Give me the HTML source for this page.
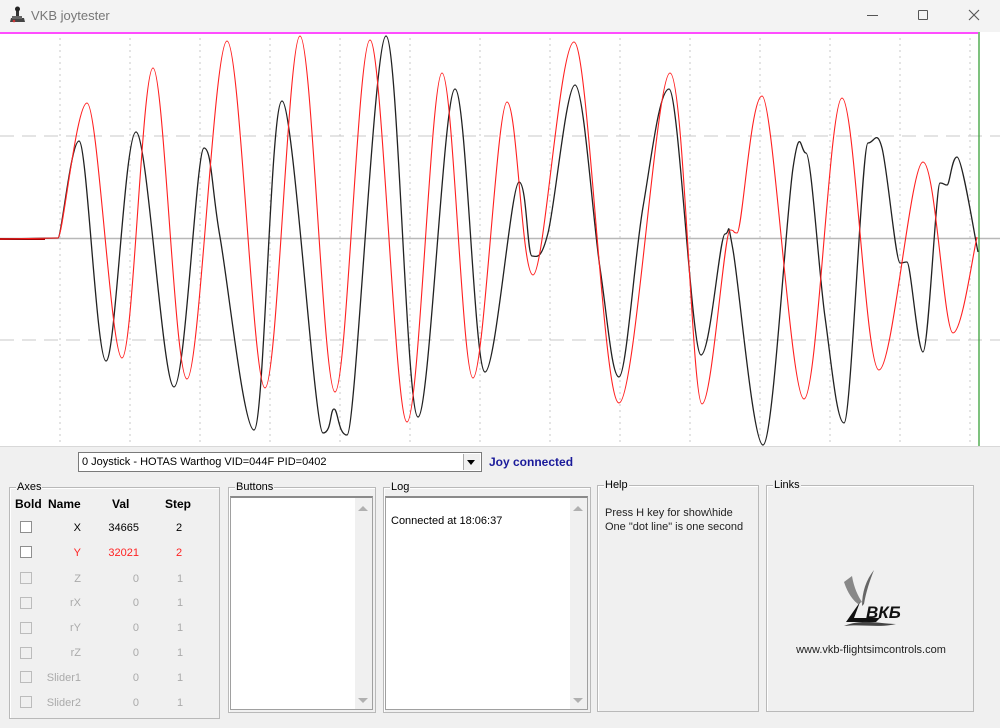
<!DOCTYPE html>
<html><head><meta charset="utf-8"><style>
*{margin:0;padding:0;box-sizing:border-box}
body{width:1000px;height:728px;overflow:hidden;background:#f0f0f0;font-family:"Liberation Sans",sans-serif;font-size:11px;color:#000;position:relative}
.a{position:absolute;white-space:nowrap}
.title{left:0;top:0;width:1000px;height:32px;background:#f3f3f3}
.gb{position:absolute;border:1px solid #b9b9b9;box-shadow:inset 1px 1px 0 #fff}
.lg{position:absolute;top:-7px;left:6px;background:#f0f0f0;padding:0 1px;font-size:11px}
.lb{position:absolute;background:#fff;border:1px solid #a0a0a0;border-top:2px solid #8a8a8a}
.sb{position:absolute;right:0;top:0;bottom:0;width:17px;background:#f0f0f0}
.cb{position:absolute;left:20px;width:12px;height:12px;border:1px solid #8f8f8f;background:#fff}
.cb.d{background:#f0f0f0;border-color:#bcbcbc}
.r{position:absolute;text-align:right}
</style></head><body>
<div class="a title"></div>
<svg class="a" style="left:10px;top:6px" width="16" height="18" viewBox="0 0 16 18"><rect x="6" y="1" width="3" height="9" fill="#333"/><circle cx="7.5" cy="3" r="2.5" fill="#222"/><path d="M1 12h13l1 4H0z" fill="#444"/><rect x="2" y="10" width="10" height="3" fill="#666"/><circle cx="4" cy="15" r="1.3" fill="#c33"/></svg>
<div class="a" style="left:31px;top:8px;font-size:13px;color:#777">VKB joytester</div>
<div class="a" style="left:867px;top:15px;width:11px;height:1px;background:#555"></div>
<div class="a" style="left:918px;top:10px;width:10px;height:10px;border:1px solid #555;border-radius:1px"></div>
<svg class="a" style="left:968px;top:9px" width="12" height="12"><path d="M1 1L11 11M11 1L1 11" stroke="#555" stroke-width="1.1"/></svg>

<svg class="a" style="left:0;top:32px" width="1000" height="414" viewBox="0 32 1000 414">
<rect x="0" y="32" width="1000" height="414" fill="#fff"/>
<g stroke="#c8c8c8" stroke-width="1" stroke-dasharray="2,4" id="vg"></g>
<line x1="0" y1="136" x2="1000" y2="136" stroke="#c8c8c8" stroke-dasharray="14,8"/>
<line x1="0" y1="340" x2="1000" y2="340" stroke="#c8c8c8" stroke-dasharray="14,8"/>
<line x1="0" y1="238.5" x2="1000" y2="238.5" stroke="#b8b8b8" stroke-width="1.5"/>
<line x1="0" y1="33" x2="978" y2="33" stroke="#ff4dff" stroke-width="2"/>
<line x1="979" y1="32" x2="979" y2="446" stroke="#2a9a2a" stroke-width="1.2"/>
<line x1="0" y1="239" x2="45" y2="239" stroke="#a00" stroke-width="2"/>
<path id="blk" fill="none" stroke="#222" stroke-width="1.3"/>
<path id="red" fill="none" stroke="#ff2020" stroke-width="1.1"/>
</svg>

<div class="a" style="left:0;top:446px;width:1000px;height:1px;background:#d8d8d8"></div>
<div class="a" style="left:78px;top:452px;width:404px;height:20px;background:#fff;border:1px solid #7a7a7a"></div>
<div class="a" style="left:82px;top:456px">0 Joystick - HOTAS Warthog VID=044F PID=0402</div>
<div class="a" style="left:463px;top:454px;width:17px;height:16px;background:#f0f0f0;border-left:1px solid #aaa"></div>
<div class="a" style="left:467px;top:460px;width:0;height:0;border-left:4px solid transparent;border-right:4px solid transparent;border-top:5px solid #000"></div>
<div class="a" style="left:489px;top:455px;font-weight:bold;font-size:12px;color:#1a1a9a">Joy connected</div>

<div class="gb" style="left:9px;top:487px;width:211px;height:232px"><span class="lg" style="left:6px">Axes</span></div>
<div class="a" style="left:15px;top:497px;font-weight:bold;font-size:12px">Bold</div>
<div class="a" style="left:48px;top:497px;font-weight:bold;font-size:12px">Name</div>
<div class="a" style="left:112px;top:497px;font-weight:bold;font-size:12px">Val</div>
<div class="a" style="left:165px;top:497px;font-weight:bold;font-size:12px">Step</div>

<div class="cb" style="top:521px"></div><div class="r" style="left:40px;width:41px;top:522px">X</div><div class="r" style="left:90px;width:49px;top:522px">34665</div><div class="a" style="left:176px;top:522px">2</div>
<div class="cb" style="top:546px"></div><div class="r" style="left:40px;width:41px;top:547px;color:#f22">Y</div><div class="r" style="left:90px;width:49px;top:547px;color:#f22">32021</div><div class="a" style="left:176px;top:547px;color:#f22">2</div>
<div class="cb d" style="top:572px"></div><div class="r" style="left:30px;width:51px;top:573px;color:#aaa">Z</div><div class="r" style="left:90px;width:49px;top:573px;color:#aaa">0</div><div class="a" style="left:177px;top:573px;color:#aaa">1</div>
<div class="cb d" style="top:597px"></div><div class="r" style="left:30px;width:51px;top:597px;color:#aaa">rX</div><div class="r" style="left:90px;width:49px;top:597px;color:#aaa">0</div><div class="a" style="left:177px;top:597px;color:#aaa">1</div>
<div class="cb d" style="top:622px"></div><div class="r" style="left:30px;width:51px;top:622px;color:#aaa">rY</div><div class="r" style="left:90px;width:49px;top:622px;color:#aaa">0</div><div class="a" style="left:177px;top:622px;color:#aaa">1</div>
<div class="cb d" style="top:647px"></div><div class="r" style="left:30px;width:51px;top:647px;color:#aaa">rZ</div><div class="r" style="left:90px;width:49px;top:647px;color:#aaa">0</div><div class="a" style="left:177px;top:647px;color:#aaa">1</div>
<div class="cb d" style="top:671px"></div><div class="r" style="left:30px;width:51px;top:672px;color:#aaa">Slider1</div><div class="r" style="left:90px;width:49px;top:672px;color:#aaa">0</div><div class="a" style="left:177px;top:672px;color:#aaa">1</div>
<div class="cb d" style="top:696px"></div><div class="r" style="left:30px;width:51px;top:697px;color:#aaa">Slider2</div><div class="r" style="left:90px;width:49px;top:697px;color:#aaa">0</div><div class="a" style="left:177px;top:697px;color:#aaa">1</div>

<div class="gb" style="left:228px;top:487px;width:148px;height:226px"><span class="lg">Buttons</span></div>
<div class="lb" style="left:230px;top:496px;width:143px;height:214px"><div class="sb"></div></div>
<div class="a" style="left:358px;top:506px;border-left:5px solid transparent;border-right:5px solid transparent;border-bottom:5px solid #b0b0b0"></div>
<div class="a" style="left:358px;top:698px;border-left:5px solid transparent;border-right:5px solid transparent;border-top:5px solid #b0b0b0"></div>

<div class="gb" style="left:383px;top:487px;width:208px;height:226px"><span class="lg">Log</span></div>
<div class="lb" style="left:385px;top:496px;width:203px;height:214px"><div class="sb"></div></div>
<div class="a" style="left:573px;top:506px;border-left:5px solid transparent;border-right:5px solid transparent;border-bottom:5px solid #b0b0b0"></div>
<div class="a" style="left:573px;top:698px;border-left:5px solid transparent;border-right:5px solid transparent;border-top:5px solid #b0b0b0"></div>
<div class="a" style="left:391px;top:515px">Connected at 18:06:37</div>

<div class="gb" style="left:597px;top:485px;width:162px;height:227px"><span class="lg" style="left:6px">Help</span></div>
<div class="a" style="left:605px;top:506px;line-height:14px;color:#222">Press H key for show\hide<br>One "dot line" is one second</div>

<div class="gb" style="left:766px;top:485px;width:208px;height:227px"><span class="lg" style="left:6px">Links</span></div>
<svg class="a" style="left:840px;top:568px" width="76" height="62" viewBox="0 0 76 62">
<path d="M12 8 C14 20 18 28 22 34 L18 36 C10 30 6 20 4 14 Z" fill="#888"/>
<path d="M34 2 C30 12 26 24 24 36 L22 38 C22 24 26 12 34 2 Z" fill="#666"/>
<path d="M20 34 L14 50 L40 50 L36 54 L6 54 Z" fill="#111"/>
<path d="M4 58 C24 50 40 56 56 56 C40 60 22 56 4 58Z" fill="#444"/>
<text x="26" y="50" font-family="Liberation Sans,sans-serif" font-weight="bold" font-style="italic" font-size="17" fill="#111">ВКБ</text>
</svg>
<div class="a" style="left:771px;top:644px;width:200px;text-align:center;color:#222">www.vkb-flightsimcontrols.com</div>

<script>
var g=document.getElementById('vg'),s='';
for(var x=60;x<1000;x+=70)s+='<line x1="'+x+'" y1="32" x2="'+x+'" y2="446"/>';
g.innerHTML=s;
function cr(p){var d='M0 239 L'+p[0][0]+' '+p[0][1];for(var i=0;i<p.length-1;i++){var p0=p[i-1]||p[i],p1=p[i],p2=p[i+1],p3=p[i+2]||p2;
var c1x=p1[0]+(p2[0]-p0[0])/6,c1y=p1[1]+(p2[1]-p0[1])/6,c2x=p2[0]-(p3[0]-p1[0])/6,c2y=p2[1]-(p3[1]-p1[1])/6;
if((p1[1]-p0[1])*(p2[1]-p1[1])<0||i==0)c1y=p1[1];if(p3&&(p2[1]-p1[1])*(p3[1]-p2[1])<0)c2y=p2[1];
d+=' C'+c1x.toFixed(1)+' '+c1y.toFixed(1)+' '+c2x.toFixed(1)+' '+c2y.toFixed(1)+' '+p2[0]+' '+p2[1];}return d;}
var red=[[58,238],[87,103],[122,358],[153,68],[187,379],[227,41],[265,388],[300,36],[335,392],[370,40],[407,422],[442,73],[473,378],[507,102],[533,275],[574,42],[619,403],[670,73],[702,404],[730,230],[737,233],[762,96],[804,399],[842,98],[879,370],[923,162],[953,333],[977,237]];
var blk=[[58,238],[79,141],[106,361],[136,132],[174,387],[204,148],[220,237],[254,430],[282,101],[323,433],[334,409],[347,435],[386,36],[418,417],[455,89],[485,372],[519,182],[532,256],[548,233],[575,85],[600,268],[619,377],[643,207],[669,89],[701,355],[725,234],[733,250],[763,445],[793,168],[806,153],[825,317],[844,423],[868,143],[882,148],[900,263],[907,262],[923,352],[940,183],[947,185],[957,157],[978,252]];
document.getElementById('red').setAttribute('d',cr(red));
document.getElementById('blk').setAttribute('d',cr(blk));
</script>
</body></html>
